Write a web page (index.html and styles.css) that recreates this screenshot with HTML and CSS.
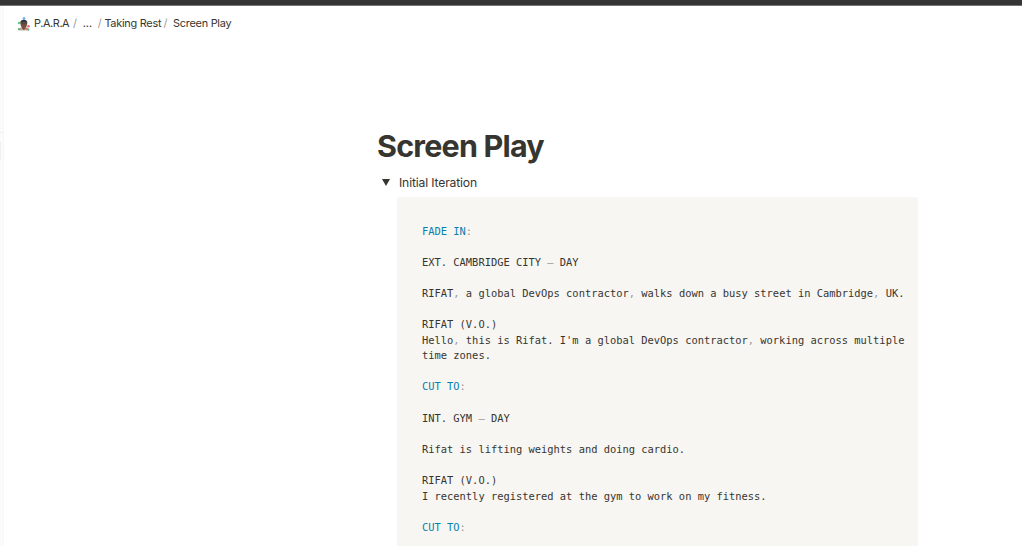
FILE: index.html
```html
<!DOCTYPE html>
<html lang="en">
<head>
    <meta charset="utf-8">
    <title>Screen Play</title>
    <link rel="stylesheet" href="styles.css">
</head>
<body>
    <div class="window-bar"></div>
    <div class="app">
        <aside class="sidebar">
            <div class="sidebar-divider"></div>
            <div class="sidebar-scroll"></div>
        </aside>
        <main class="page">
            <nav class="breadcrumb">
                <svg class="page-icon" viewBox="0 0 13 14">
                    <circle cx="7" cy="1.5" r="1.4" fill="#73b5f3"/>
                    <circle cx="1.9" cy="6" r="1.2" fill="#58cf86"/>
                    <circle cx="11.5" cy="9.3" r="1.3" fill="#ef6670"/>
                    <path d="M1.5 13.5 Q2 10.5 5 10 H8.5 Q11.5 10.5 12 13.5Z" fill="#b9aa9e"/>
                    <path d="M5 9.5h3.5v2L6.8 13 5 11.5z" fill="#79503f"/>
                    <ellipse cx="6.8" cy="7" rx="3.2" ry="4" fill="#79503f"/>
                    <path d="M3.3 6.5Q3 2.8 6.8 2.8T10.3 6.5L9 5H4.5Z" fill="#36333a"/>
                    <path d="M3.6 5.5h6.5v1.8H3.6z" fill="#4b4645"/>
                    <circle cx="2" cy="12" r="1.1" fill="#50ac64"/>
                    <circle cx="11.5" cy="12.5" r="1" fill="#54b977"/>
                    <circle cx="9.8" cy="11.8" r=".9" fill="#e75f61"/>
                </svg>
                <span class="crumb crumb-root">P.A.R.A</span>
                <span class="slash">/</span>
                <span class="crumb crumb-more">...</span>
                <span class="slash">/</span>
                <span class="crumb crumb-parent">Taking Rest</span>
                <span class="slash">/</span>
                <span class="crumb crumb-current">Screen Play</span>
            </nav>
            <article class="content">
                <h1 class="title">Screen Play</h1>
                <div class="toggle">
                    <svg class="toggle-arrow" viewBox="0 0 8 7"><path d="M0 0h8L4 7z"/></svg>
                    <span>Initial Iteration</span>
                </div>
<pre class="code"><span class="key">FADE IN</span><span class="punct">:</span>

EXT. CAMBRIDGE CITY <span class="punct">–</span> DAY

RIFAT<span class="punct">,</span> a global DevOps contractor<span class="punct">,</span> walks down a busy street in Cambridge<span class="punct">,</span> UK.

RIFAT (V.O.)
Hello<span class="punct">,</span> this is Rifat. I'm a global DevOps contractor<span class="punct">,</span> working across multiple time zones.

<span class="key">CUT TO</span><span class="punct">:</span>

INT. GYM <span class="punct">–</span> DAY

Rifat is lifting weights and doing cardio.

RIFAT (V.O.)
I recently registered at the gym to work on my fitness.

<span class="key">CUT TO</span><span class="punct">:</span>
</pre>
            </article>
        </main>
    </div>
</body>
</html>
```
FILE: styles.css
```css
body {
    margin: 0;
    height: 100vh;
    overflow: hidden;
    display: flex;
    flex-direction: column;
    background-color: #fff;
    color: #37352f;
    font-family: Inter, "Liberation Sans", sans-serif;
}

.window-bar {
    flex: none;
    height: 5px;
    background-color: #353535;
    border-bottom: 1px solid #777;
}

.app {
    flex: 1;
    min-height: 0;
    display: flex;
}

.sidebar {
    flex: none;
    width: 3px;
    padding-top: 126px;
    background-color: #fbfbfa;
    border-right: 1px solid #f7f7f6;
}

.sidebar-divider {
    height: 1px;
    background-color: #f1f1f0;
}

.sidebar-scroll {
    width: 1px;
    height: 18px;
    margin-top: 9px;
    background-color: #f0f0ef;
}

.page {
    flex: 1;
    min-width: 0;
}

.breadcrumb {
    display: flex;
    align-items: center;
    height: 34px;
    padding-left: 13px;
    font-size: 10.9px;
    letter-spacing: -0.25px;
    white-space: nowrap;
}

.page-icon {
    width: 13px;
    height: 14px;
    margin-top: 2px;
    margin-right: 4px;
}

.slash {
    color: #9b9a97;
}

.crumb-root {
    width: 39px;
    letter-spacing: -0.4px;
}

.crumb-more {
    width: 15px;
    margin-left: 6px;
    letter-spacing: 0;
}

.crumb-parent {
    width: 59px;
    margin-left: 3px;
}

.crumb-current {
    margin-left: 6px;
}

.content {
    width: 540px;
    margin-left: 373px;
    padding-top: 86px;
}

.title {
    margin: 0;
    font-size: 30.5px;
    line-height: 40px;
    font-weight: 700;
    letter-spacing: -0.8px;
}

.toggle {
    display: flex;
    align-items: center;
    height: 24px;
    margin-top: 4px;
    padding-left: 5px;
    font-size: 12.2px;
    letter-spacing: -0.17px;
}

.toggle-arrow {
    width: 8px;
    height: 7px;
    margin-right: 9px;
    fill: #37352f;
}

.code {
    box-sizing: border-box;
    height: 359px;
    margin: 3px 0 0 20px;
    padding: 26.5px 0 0 25px;
    width: 521px;
    border-radius: 2px;
    background-color: #f7f6f3;
    font-family: "DejaVu Sans Mono", monospace;
    font-size: 10.42px;
    line-height: 15.6px;
    white-space: pre-wrap;
}

.key {
    color: #0780ae;
}

.punct {
    color: #999;
}
```
